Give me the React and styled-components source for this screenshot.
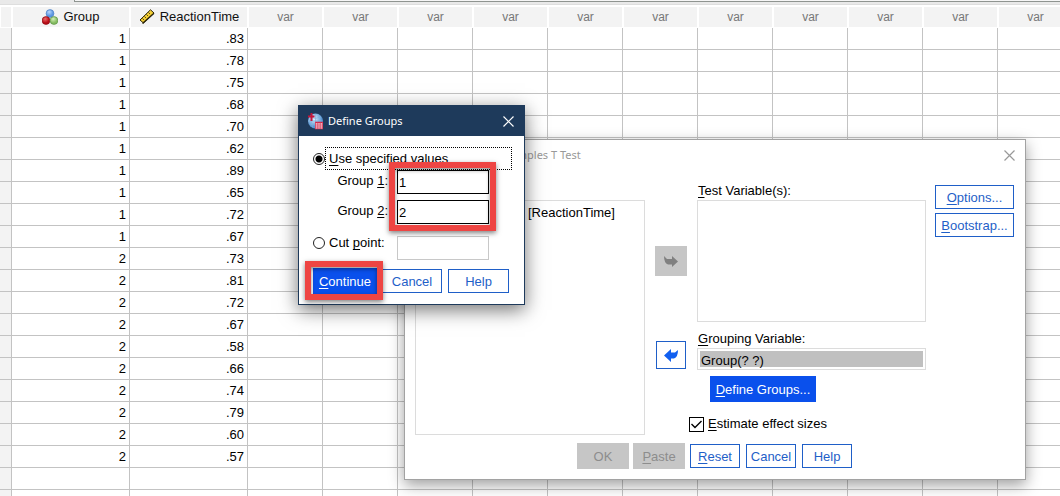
import React from "react";
import styled, { createGlobalStyle, css } from "styled-components";

const GlobalStyle = createGlobalStyle`
  *, *::before, *::after { box-sizing: border-box; }
  body { margin: 0; background: #fff; overflow: hidden; }
  body, button, input { font: 13px/16px "Liberation Sans", Arial, sans-serif; color: #000; }
  u { text-underline-offset: 2px; text-decoration-thickness: 1px; text-decoration-skip-ink: none; }
`;

const blue = "#1f5fc8";

const Page = styled.main`
  position: relative;
  height: 100vh;
  overflow: hidden;
`;

/* ---------- data sheet ---------- */

const FormulaBar = styled.div`
  height: 5px;
  padding-left: 74px;
  background: #e9e9e9;
  border-bottom: 1px solid #dedede;
`;

const FormulaField = styled.div`
  height: 2px;
  background: #f6f6f6;
  border: solid #8f9490;
  border-width: 0 0 1px 1px;
`;

const Sheet = styled.table`
  width: 1073px;
  margin-top: 1px;
  table-layout: fixed;
  border-collapse: separate;
  border-spacing: 0;
`;

const Column = styled.col`
  width: ${(p) => p.$width}px;
`;

const HeadCell = styled.th`
  height: 22px;
  padding: 0;
  font-weight: normal;
  color: ${(p) => (p.$unused ? "#777" : "#111")};
  font-size: ${(p) => (p.$unused ? 12 : 13)}px;
  background: #f3f3f3;
  border: 1px solid #fff;
`;

const HeadLabel = styled.span`
  display: flex;
  align-items: center;
  justify-content: center;
  gap: 5px;
`;

const Cell = styled.td`
  height: 22px;
  padding: 0 3px 0 0;
  line-height: 18px;
  text-align: right;
  border: solid #c3c3c3;
  border-width: 0 1px 1px 0;
  background: ${(p) => (p.$gutter ? "#f3f3f3" : "#fff")};
`;

/* ---------- windows ---------- */

const Window = styled.section`
  position: absolute;
  display: flex;
  flex-direction: column;
  background: #fff;
`;

const TestWindow = styled(Window)`
  left: 404px;
  top: 139px;
  width: 622px;
  border: 1px solid #a2a2a2;
  box-shadow: 0 5px 14px rgba(0, 0, 0, 0.38);
`;

const GroupsWindow = styled(Window)`
  left: 298px;
  top: 105px;
  width: 227px;
  border: 1px solid #1e3a5b;
  box-shadow: 0 5px 18px rgba(0, 0, 0, 0.55);
`;

const TitleBar = styled.header`
  display: flex;
  align-items: center;
  gap: 4px;
  height: 30px;
  padding: 0 10px 0 8px;
  color: ${(p) => (p.$active ? "#fff" : "#999")};
  background: ${(p) => (p.$active ? "#1e3a5b" : "#fff")};
`;

const Title = styled.h2`
  flex: 1;
  margin: 0;
  font: 11px/16px "Noto Sans", sans-serif;
`;

const CloseButton = styled.button`
  display: flex;
  padding: 0;
  border: 0;
  background: none;
  color: inherit;
`;

const Button = styled.button`
  height: 24px;
  margin: 1px;
  padding: 2px 0 0;
  color: ${blue};
  background: #fff;
  border: 1px solid ${blue};
  ${(p) =>
    p.$primary &&
    css`
      height: 26px;
      margin: 0;
      color: #fff;
      background: #0a50ec;
      border-color: #0a50ec;
    `}
  &:disabled {
    height: 26px;
    margin: 0;
    color: #8d8d8d;
    background: #c6c6c6;
    border-color: #c6c6c6;
  }
`;

/* ---------- T test window ---------- */

const TestBody = styled.div`
  display: grid;
  grid-template-columns: 230px 32px 1fr 79px;
  column-gap: 10px;
  padding: 13px 10px 0;
`;

const VariableList = styled.ul`
  height: ${(p) => p.$height}px;
  margin: 0;
  padding: 4px 2px;
  list-style: none;
  border: 1px solid #dcdcdc;
`;

const SourceColumn = styled.div`
  padding-top: 17px;
`;

const Variable = styled.li`
  display: flex;
  align-items: center;
  gap: 4px;
`;

const VariableLabel = styled.span`
  width: 86px;
`;

const ArrowColumn = styled.div`
  display: flex;
  flex-direction: column;
  gap: 64px;
  padding-top: 63px;
`;

const ArrowButton = styled(Button)`
  display: flex;
  align-items: center;
  justify-content: center;
  height: 28px;
  padding: 0;
  color: #1260f0;
  &:disabled {
    height: 30px;
    color: #808080;
  }
`;

const TargetColumn = styled.div`
  display: flex;
  flex-direction: column;
  align-items: stretch;
`;

const FieldLabel = styled.label`
  height: 17px;
  padding-left: 1px;
  margin-top: ${(p) => p.$top || 0}px;
`;

const GroupingField = styled.input`
  width: 100%;
  height: 22px;
  padding: 2px 2px 0 3px;
  background: #c0c0c0;
  border: 1px solid #dcdcdc;
  border-radius: 0;
  box-shadow: inset 0 0 0 2px #fff;
`;

const DefineButton = styled(Button)`
  align-self: flex-start;
  width: 106px;
  margin: 6px 0 0 13px;
`;

const CheckRow = styled.label`
  display: flex;
  align-items: center;
  gap: 4px;
  margin: 14px 0 0 -8px;
`;

const CheckBox = styled.input`
  appearance: none;
  display: grid;
  width: 15px;
  height: 15px;
  margin: 0;
  border: 1px solid #000;
  grid-area: 1 / 1;
`;

const CheckFrame = styled.span`
  display: grid;
  svg { grid-area: 1 / 1; pointer-events: none; }
`;

const SideColumn = styled.div`
  display: flex;
  flex-direction: column;
  gap: 4px;
  padding-top: 2px;
  margin: 0 1px 0 -1px;
  ${Button} { margin: 0; }
`;

const TestFooter = styled.footer`
  display: grid;
  grid-template-columns: repeat(5, 52px);
  column-gap: 4px;
  justify-content: center;
  padding: 8px 0 10px;
`;

/* ---------- define groups window ---------- */

const GroupsForm = styled.form`
  display: flex;
  flex-direction: column;
  padding: 11px 12px 10px 14px;
`;

const RadioRow = styled.label`
  display: flex;
  align-items: center;
`;

const Radio = styled.input`
  appearance: none;
  flex: none;
  width: 12px;
  height: 12px;
  margin: 0;
  border: 1px solid #222;
  border-radius: 50%;
  &:checked { background: radial-gradient(circle, #000 3px, #fff 4px); }
`;

const FocusLabel = styled.span`
  flex: 1;
  height: 23px;
  padding: 3px 3px;
  border: 1px dotted #000;
`;

const ValueGrid = styled.div`
  display: grid;
  grid-template-columns: 75px 92px;
  column-gap: 9px;
  row-gap: 6px;
`;

const ValueLabel = styled.label`
  padding-top: 3px;
  text-align: right;
`;

const ValueInput = styled.input`
  width: 92px;
  height: 24px;
  padding: 1px 1px 0;
  background: #fff;
  border: 1px solid #000;
  border-radius: 0;
  &:disabled { border-color: #c8c8c8; }
`;

const CutRow = styled.div`
  display: flex;
  align-items: flex-start;
  justify-content: space-between;
  padding: 12px 23px 8px 0;
  ${RadioRow} { gap: 4px; height: 14px; }
`;

const GroupsFooter = styled.footer`
  display: grid;
  grid-template-columns: 64px 62px 63px;
  column-gap: 4px;
`;

const Highlight = styled.div`
  position: absolute;
  border: 6px solid #ee4543;
  box-shadow: 0 2px 5px rgba(0, 0, 0, 0.5), inset 0 2px 4px rgba(0, 0, 0, 0.45);
  pointer-events: none;
`;

const ValuesHighlight = styled(Highlight)`
  left: 90px;
  top: 56px;
  width: 107px;
  height: 69px;
`;

const ContinueHighlight = styled(Highlight)`
  left: 6px;
  top: 155px;
  width: 78px;
  height: 39px;
`;

/* ---------- drawings ---------- */

const NominalIcon = () => (
  <svg width="16" height="16" viewBox="0 0 16 16" aria-hidden="true">
    <defs>
      <radialGradient id="nb" cx=".4" cy=".3"><stop offset="0" stopColor="#b8d8ff" /><stop offset="1" stopColor="#5b96e0" /></radialGradient>
      <radialGradient id="nr" cx=".4" cy=".3"><stop offset="0" stopColor="#ef6a6a" /><stop offset="1" stopColor="#b80d18" /></radialGradient>
      <radialGradient id="ng" cx=".4" cy=".3"><stop offset="0" stopColor="#d5efb8" /><stop offset="1" stopColor="#86bd62" /></radialGradient>
    </defs>
    <circle cx="8" cy="4.5" r="3.9" fill="url(#nb)" stroke="#4a7fc4" strokeWidth=".7" />
    <circle cx="4" cy="11.5" r="3.9" fill="url(#nr)" stroke="#8d0c14" strokeWidth=".7" />
    <circle cx="12" cy="11.5" r="3.9" fill="url(#ng)" stroke="#5d9446" strokeWidth=".7" />
  </svg>
);

const ScaleIcon = () => (
  <svg width="16" height="16" viewBox="0 0 16 16" aria-hidden="true">
    <path d="M1 11 L11.5 .8 L15 4 L4.5 14 Z" fill="#f4cf35" stroke="#2d260a" />
    <path d="M3.5 9.5l1.3 1.3M5.5 7.5l1.3 1.3M7.5 5.5l1.3 1.3M9.5 3.5l1.3 1.3" stroke="#3d340e" />
    <path d="M3.5 14.5L15 4.2" stroke="#2d260a" strokeWidth="1.4" />
  </svg>
);

const AppIcon = () => (
  <svg width="17" height="17" viewBox="0 0 17 17" aria-hidden="true">
    <defs>
      <radialGradient id="globe" cx=".4" cy=".35"><stop offset="0" stopColor="#e8f3fc" /><stop offset="1" stopColor="#5b98d4" /></radialGradient>
    </defs>
    <circle cx="8.5" cy="8" r="7.5" fill="url(#globe)" />
    <path d="M8.5 1v14M1 8h14M3 4q5 3 11 0M3 12q5-3 11 0M5.5 2q-3 6 0 12M11.5 2q3 6 0 12" fill="none" stroke="#83b1dc" strokeWidth=".7" />
    <path d="M4.5 0v8M1 3.5h6.5" stroke="#c5163a" strokeWidth="2" />
    <rect x="8" y="9" width="8" height="7" fill="#f7dfe4" />
    <path d="M8 9.5h8" stroke="#cf2347" strokeWidth="1.5" />
    <path d="M8 12h8M8 14h8M8 15.8h8M8.5 9v7M10.8 9v7M13.2 9v7M15.5 9v7" stroke="#d63b5a" strokeWidth=".8" />
  </svg>
);

const CloseIcon = () => (
  <svg width="11" height="11" viewBox="0 0 11 11" aria-hidden="true">
    <path d="M.5.5l10 10M10.5.5l-10 10" stroke="currentColor" strokeWidth="1.2" />
  </svg>
);

const MoveRightIcon = () => (
  <svg width="14" height="13" viewBox="0 0 14 13" aria-hidden="true">
    <path d="M0 1L3 4H8V1L14 6.5L8 12V9.5H4Q0 8 0 1Z" fill="currentColor" />
  </svg>
);

const MoveLeftIcon = () => (
  <svg width="14" height="13" viewBox="0 0 14 13" aria-hidden="true">
    <path d="M14 1L11 3.5H7V0L0 6.5L7 13V9.5H10Q14 8 14 1Z" fill="currentColor" />
  </svg>
);

const CheckMark = () => (
  <svg width="15" height="15" viewBox="0 0 15 15" aria-hidden="true">
    <path d="M2.5 7L6 10.5L12.5 4" fill="none" stroke="#000" strokeWidth="1.4" />
  </svg>
);

/* ---------- data ---------- */

const times = [".83", ".78", ".75", ".68", ".70", ".62", ".89", ".65", ".72", ".67",
  ".73", ".81", ".72", ".67", ".58", ".66", ".74", ".79", ".60", ".57"];
const rows = [...times.map((time, i) => [i < 10 ? "1" : "2", time]), ["", ""], ["", ""]];
const unused = Array.from({ length: 11 }, (_, i) => i);

function DataSheet() {
  return (
    <Sheet>
      <colgroup>
        <Column $width={12} />
        <Column $width={118} />
        <Column $width={118} />
        {unused.map((i) => <Column key={i} $width={75} />)}
      </colgroup>
      <thead>
        <tr>
          <HeadCell />
          <HeadCell scope="col"><HeadLabel><NominalIcon />Group</HeadLabel></HeadCell>
          <HeadCell scope="col"><HeadLabel><ScaleIcon />ReactionTime</HeadLabel></HeadCell>
          {unused.map((i) => <HeadCell key={i} scope="col" $unused>var</HeadCell>)}
        </tr>
      </thead>
      <tbody>
        {rows.map(([group, time], r) => (
          <tr key={r}>
            <Cell $gutter />
            <Cell>{group}</Cell>
            <Cell>{time}</Cell>
            {unused.map((i) => <Cell key={i} />)}
          </tr>
        ))}
      </tbody>
    </Sheet>
  );
}

function TTestDialog() {
  return (
    <TestWindow aria-label="Independent-Samples T Test">
      <TitleBar>
        <AppIcon />
        <Title>Independent-Samples T Test</Title>
        <CloseButton type="button" aria-label="Close"><CloseIcon /></CloseButton>
      </TitleBar>
      <TestBody>
        <SourceColumn>
          <VariableList $height={235}>
            <Variable><ScaleIcon /><VariableLabel>Reaction Time</VariableLabel>[ReactionTime]</Variable>
          </VariableList>
        </SourceColumn>
        <ArrowColumn>
          <ArrowButton type="button" disabled aria-label="Move to test variables"><MoveRightIcon /></ArrowButton>
          <ArrowButton type="button" aria-label="Remove grouping variable"><MoveLeftIcon /></ArrowButton>
        </ArrowColumn>
        <TargetColumn>
          <FieldLabel as="span" id="test-variables"><u>T</u>est Variable(s):</FieldLabel>
          <VariableList $height={122} aria-labelledby="test-variables" />
          <FieldLabel htmlFor="grouping" $top={9}><u>G</u>rouping Variable:</FieldLabel>
          <GroupingField id="grouping" readOnly value="Group(? ?)" />
          <DefineButton type="button" $primary><u>D</u>efine Groups...</DefineButton>
          <CheckRow>
            <CheckFrame><CheckBox type="checkbox" defaultChecked /><CheckMark /></CheckFrame>
            <span><u>E</u>stimate effect sizes</span>
          </CheckRow>
        </TargetColumn>
        <SideColumn>
          <Button type="button"><u>O</u>ptions...</Button>
          <Button type="button"><u>B</u>ootstrap...</Button>
        </SideColumn>
      </TestBody>
      <TestFooter>
        <Button type="button" disabled>OK</Button>
        <Button type="button" disabled><u>P</u>aste</Button>
        <Button type="button"><u>R</u>eset</Button>
        <Button type="button">Cancel</Button>
        <Button type="button">Help</Button>
      </TestFooter>
    </TestWindow>
  );
}

function DefineGroupsDialog() {
  return (
    <GroupsWindow aria-label="Define Groups">
      <TitleBar $active>
        <AppIcon />
        <Title>Define Groups</Title>
        <CloseButton type="button" aria-label="Close"><CloseIcon /></CloseButton>
      </TitleBar>
      <GroupsForm>
        <RadioRow>
          <Radio type="radio" name="mode" defaultChecked />
          <FocusLabel><u>U</u>se specified values</FocusLabel>
        </RadioRow>
        <ValueGrid>
          <ValueLabel htmlFor="group1">Group <u>1</u>:</ValueLabel>
          <ValueInput id="group1" defaultValue="1" />
          <ValueLabel htmlFor="group2">Group <u>2</u>:</ValueLabel>
          <ValueInput id="group2" defaultValue="2" />
        </ValueGrid>
        <CutRow>
          <RadioRow>
            <Radio type="radio" name="mode" />
            <span>Cut <u>p</u>oint:</span>
          </RadioRow>
          <ValueInput disabled aria-label="Cut point value" />
        </CutRow>
        <GroupsFooter>
          <Button type="button" $primary><u>C</u>ontinue</Button>
          <Button type="button">Cancel</Button>
          <Button type="button">Help</Button>
        </GroupsFooter>
      </GroupsForm>
      <ValuesHighlight />
      <ContinueHighlight />
    </GroupsWindow>
  );
}

export default function App() {
  return (
    <Page>
      <GlobalStyle />
      <FormulaBar><FormulaField /></FormulaBar>
      <DataSheet />
      <TTestDialog />
      <DefineGroupsDialog />
    </Page>
  );
}
